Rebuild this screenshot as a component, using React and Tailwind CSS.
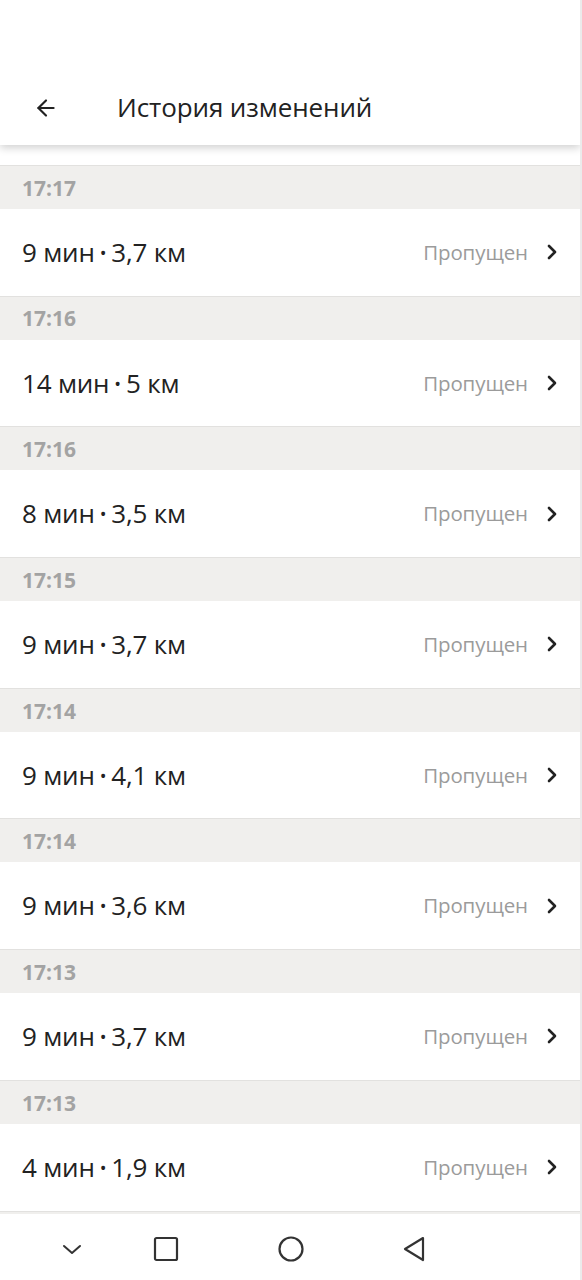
import { ArrowLeft, ChevronRight } from 'lucide-react';

const entries = [
    { time: '17:17', min: 9, km: '3,7' },
    { time: '17:16', min: 14, km: '5' },
    { time: '17:16', min: 8, km: '3,5' },
    { time: '17:15', min: 9, km: '3,7' },
    { time: '17:14', min: 9, km: '4,1' },
    { time: '17:14', min: 9, km: '3,6' },
    { time: '17:13', min: 9, km: '3,7' },
    { time: '17:13', min: 4, km: '1,9' },
];

function Entry({ time, min, km }) {
    return (
        <div>
            <div className="h-[44px] bg-[#f0efed] border-t border-[#e2e1df] px-[22px] flex items-center">
                <span className="text-[21px] font-bold text-[#a3a3a3] pt-[2px]">{time}</span>
            </div>
            <div className="h-[86.7px] bg-white flex items-center pl-[22px] pr-[16px]">
                <span className="flex-1 text-[26px] text-[#222] tracking-[-0.2px]">
                    {min} мин<span className="text-[18px] mx-[5px] relative top-[-2px]">•</span>{km} км
                </span>
                <span className="text-[20.5px] text-[#9b9b9b] mr-[12px] tracking-[-0.1px]">Пропущен</span>
                <ChevronRight size={24} strokeWidth={2.6} className="text-[#222]" />
            </div>
        </div>
    );
}

export default function App() {
    return (
        <div className="w-[582px] h-[1280px] bg-white flex flex-col overflow-hidden font-['Open_Sans','Noto_Sans',sans-serif] border-r-2 border-[#ebebeb]">
            <div className="h-[145px] bg-white flex items-end shadow-[0_3px_8px_rgba(0,0,0,0.18)] relative z-10 shrink-0">
                <div className="h-[75px] w-full flex items-center">
                    <ArrowLeft size={26} strokeWidth={2} className="ml-[33px] text-[#222]" />
                    <h1 className="ml-[58px] text-[26px] font-medium text-[#222] tracking-[-0.1px]">История изменений</h1>
                </div>
            </div>
            <div className="h-[20px] shrink-0" />
            <div className="flex-1 overflow-hidden">
                {entries.map((e, i) => (
                    <Entry key={i} {...e} />
                ))}
                <div className="border-t border-[#e2e1df] bg-[#f0efed] h-[10px]" />
            </div>
            <div className="h-[66px] bg-white shrink-0 flex items-center relative">
                <svg width="22" height="14" viewBox="0 0 22 14" className="absolute left-[61px] top-[29px]">
                    <path d="M3 3 L11 10 L19 3" fill="none" stroke="#333" strokeWidth="2" strokeLinecap="round" strokeLinejoin="round" />
                </svg>
                <svg width="26" height="26" viewBox="0 0 26 26" className="absolute left-[153px] top-[22px]">
                    <rect x="2" y="2" width="22" height="22" rx="1.5" fill="none" stroke="#333" strokeWidth="2.2" />
                </svg>
                <svg width="28" height="28" viewBox="0 0 28 28" className="absolute left-[277px] top-[21px]">
                    <circle cx="14" cy="14" r="11.5" fill="none" stroke="#333" strokeWidth="2.2" />
                </svg>
                <svg width="26" height="28" viewBox="0 0 26 28" className="absolute left-[401px] top-[21px]">
                    <path d="M22 3 L4 14 L22 25 Z" fill="none" stroke="#333" strokeWidth="2.2" strokeLinejoin="round" />
                </svg>
            </div>
        </div>
    );
}
